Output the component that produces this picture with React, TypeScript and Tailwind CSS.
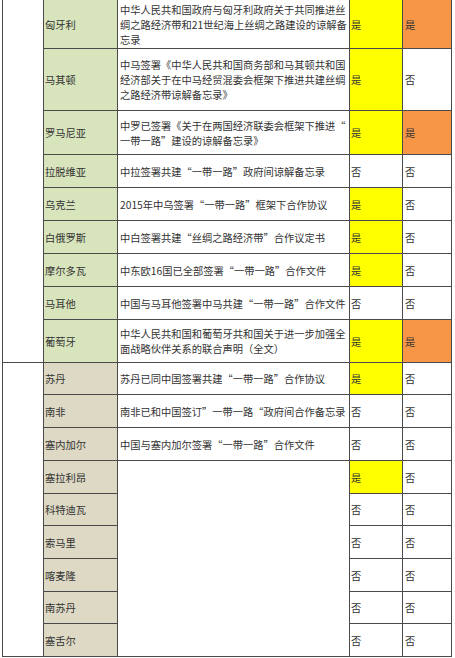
import React from 'react';

type Row = {
  country: string;
  lines?: string[];
  yes: boolean;
  flag: boolean;
  region: 'eu' | 'af';
};

const rows: Row[] = [
  {
    country: '匈牙利',
    lines: [
      '中华人民共和国政府与匈牙利政府关于共同推进丝',
      '绸之路经济带和21世纪海上丝绸之路建设的谅解备',
      '忘录',
    ],
    yes: true,
    flag: true,
    region: 'eu',
  },
  {
    country: '马其顿',
    lines: [
      '中马签署《中华人民共和国商务部和马其顿共和国',
      '经济部关于在中马经贸混委会框架下推进共建丝绸',
      '之路经济带谅解备忘录》',
    ],
    yes: true,
    flag: false,
    region: 'eu',
  },
  {
    country: '罗马尼亚',
    lines: ['中罗已签署《关于在两国经济联委会框架下推进“', '一带一路”建设的谅解备忘录》'],
    yes: true,
    flag: true,
    region: 'eu',
  },
  { country: '拉脱维亚', lines: ['中拉签署共建“一带一路”政府间谅解备忘录'], yes: false, flag: false, region: 'eu' },
  { country: '乌克兰', lines: ['2015年中乌签署“一带一路”框架下合作协议'], yes: true, flag: false, region: 'eu' },
  { country: '白俄罗斯', lines: ['中白签署共建“丝绸之路经济带”合作议定书'], yes: true, flag: false, region: 'eu' },
  { country: '摩尔多瓦', lines: ['中东欧16国已全部签署“一带一路”合作文件'], yes: true, flag: false, region: 'eu' },
  { country: '马耳他', lines: ['中国与马耳他签署中马共建“一带一路”合作文件'], yes: false, flag: false, region: 'eu' },
  {
    country: '葡萄牙',
    lines: ['中华人民共和国和葡萄牙共和国关于进一步加强全', '面战略伙伴关系的联合声明（全文）'],
    yes: true,
    flag: true,
    region: 'eu',
  },
  { country: '苏丹', lines: ['苏丹已同中国签署共建“一带一路”合作协议'], yes: true, flag: false, region: 'af' },
  { country: '南非', lines: ['南非已和中国签订”一带一路“政府间合作备忘录'], yes: false, flag: false, region: 'af' },
  { country: '塞内加尔', lines: ['中国与塞内加尔签署“一带一路”合作文件'], yes: false, flag: false, region: 'af' },
  { country: '塞拉利昂', yes: true, flag: false, region: 'af' },
  { country: '科特迪瓦', yes: false, flag: false, region: 'af' },
  { country: '索马里', yes: false, flag: false, region: 'af' },
  { country: '喀麦隆', yes: false, flag: false, region: 'af' },
  { country: '南苏丹', yes: false, flag: false, region: 'af' },
  { country: '塞舌尔', yes: false, flag: false, region: 'af' },
];

export default function App() {
  return (
    <div
      className="min-h-[658px] w-[455px] bg-white pl-[2px] text-[10.25px] leading-[15px] text-[#333]"
      style={{ fontFamily: '"Noto Sans CJK SC", "Noto Sans", sans-serif' }}
    >
      <div className="grid w-[450px] grid-cols-[40px_73px_231px_52px_48px] grid-rows-[48px_61px_43px_32px_32px_32px_32px_32px_42px_31px_32px_32px_32px_31px_32px_32px_31px_32px] gap-px bg-[#4a4a4a] pb-px pl-px pr-px">
        {/* region column, blank merged cells */}
        <div className="col-start-1 row-span-9 row-start-1 bg-white" />
        <div className="col-start-1 row-span-9 row-start-10 bg-white" />

        {rows.map((r, i) => (
          <React.Fragment key={r.country}>
            <div
              className={`col-start-2 flex items-center pl-px ${
                r.region === 'eu' ? 'bg-[#d8e4bc]' : 'bg-[#ddd9c4]'
              }`}
            >
              {r.country}
            </div>
            {r.lines ? (
              <div className="flex flex-col justify-center whitespace-nowrap bg-white pl-[2px]">
                {r.lines.map((l) => (
                  <span key={l}>{l}</span>
                ))}
              </div>
            ) : i === 12 ? (
              <div className="row-span-6 bg-white" />
            ) : null}
            <div className={`flex items-center pl-px ${r.yes ? 'bg-[#ffff00]' : 'bg-white'}`}>
              {r.yes ? '是' : '否'}
            </div>
            <div className={`flex items-center pl-[2px] ${r.flag ? 'bg-[#f79646]' : 'bg-white'}`}>
              {r.flag ? '是' : '否'}
            </div>
          </React.Fragment>
        ))}
      </div>
    </div>
  );
}
